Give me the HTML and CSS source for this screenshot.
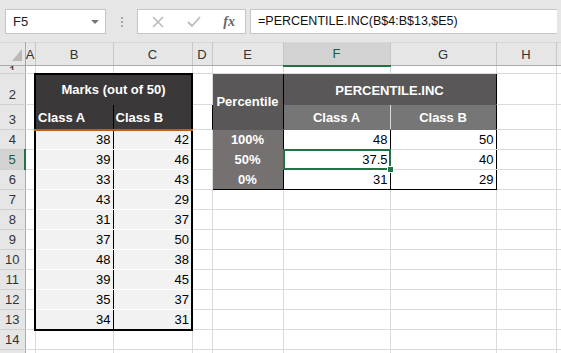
FILE: index.html
```html
<!DOCTYPE html>
<html>
<head>
<meta charset="utf-8">
<link rel="stylesheet" href="styles.css">
</head>
<body>
<div class="topbar">
  <div class="namebox"><span>F5</span><span class="caret"></span></div>
  <div class="dots"><i></i><i></i><i></i></div>
  <div class="fxbox">
    <svg class="ico" width="14" height="14" viewBox="0 0 14 14"><path d="M2 2 L12 12 M12 2 L2 12" stroke="#bcbcbc" stroke-width="1.6" fill="none"/></svg>
    <svg class="ico" width="16" height="14" viewBox="0 0 16 14"><path d="M2 7 L6 11 L14 2" stroke="#bcbcbc" stroke-width="1.8" fill="none"/></svg>
    <span class="fx">fx</span>
  </div>
  <div class="formula">=PERCENTILE.INC(B$4:B$13,$E5)</div>
</div>
<table class="sheet">
  <colgroup>
    <col class="w-rh"><col class="w-a"><col class="w-b"><col class="w-c"><col class="w-d"><col class="w-e"><col class="w-f"><col class="w-g"><col class="w-h"><col class="w-i">
  </colgroup>
  <tr class="hdr">
    <th class="corner"><svg width="12" height="14" viewBox="0 0 12 14"><polygon points="11,1 11,13 1,13" fill="#b9b9b9"/></svg></th>
    <th>A</th><th>B</th><th>C</th><th>D</th><th>E</th><th class="sel-col">F</th><th>G</th><th>H</th><th></th>
  </tr>
  <tr class="r1">
    <th class="rh"><div class="clip">1</div></th><td></td><td></td><td></td><td></td><td></td><td></td><td></td><td></td><td></td>
  </tr>
  <tr class="r2">
    <th class="rh">2</th><td></td>
    <td colspan="2" class="lt-title">Marks (out of 50)</td>
    <td></td>
    <td rowspan="2" class="rt-pct">Percentile</td>
    <td colspan="2" class="rt-title">PERCENTILE.INC</td>
    <td></td><td></td>
  </tr>
  <tr class="r3">
    <th class="rh">3</th><td></td>
    <td class="lt-head lt-l">Class A</td><td class="lt-head lt-r">Class B</td>
    <td></td>
    <td class="rt-head">Class A</td><td class="rt-head rt-g">Class B</td>
    <td></td><td></td>
  </tr>
  <tr class="rn">
    <th class="rh">4</th><td></td>
    <td class="lt-d lt-l">38</td><td class="lt-d lt-r">42</td><td></td>
    <td class="rt-lab">100%</td><td class="rt-d rt-f">48</td><td class="rt-d rt-g">50</td><td></td><td></td>
  </tr>
  <tr class="rn">
    <th class="rh sel-row">5</th><td></td>
    <td class="lt-d lt-l">39</td><td class="lt-d lt-r">46</td><td></td>
    <td class="rt-lab">50%</td><td class="rt-d rt-f active">37.5</td><td class="rt-d rt-g">40</td><td></td><td></td>
  </tr>
  <tr class="rn">
    <th class="rh">6</th><td></td>
    <td class="lt-d lt-l">33</td><td class="lt-d lt-r">43</td><td></td>
    <td class="rt-lab rt-last">0%</td><td class="rt-d rt-f rt-last">31</td><td class="rt-d rt-g rt-last">29</td><td></td><td></td>
  </tr>
  <tr class="rn">
    <th class="rh">7</th><td></td>
    <td class="lt-d lt-l">43</td><td class="lt-d lt-r">29</td><td></td><td></td><td></td><td></td><td></td><td></td>
  </tr>
  <tr class="rn">
    <th class="rh">8</th><td></td>
    <td class="lt-d lt-l">31</td><td class="lt-d lt-r">37</td><td></td><td></td><td></td><td></td><td></td><td></td>
  </tr>
  <tr class="rn">
    <th class="rh">9</th><td></td>
    <td class="lt-d lt-l">37</td><td class="lt-d lt-r">50</td><td></td><td></td><td></td><td></td><td></td><td></td>
  </tr>
  <tr class="rn">
    <th class="rh">10</th><td></td>
    <td class="lt-d lt-l">48</td><td class="lt-d lt-r">38</td><td></td><td></td><td></td><td></td><td></td><td></td>
  </tr>
  <tr class="rn">
    <th class="rh">11</th><td></td>
    <td class="lt-d lt-l">39</td><td class="lt-d lt-r">45</td><td></td><td></td><td></td><td></td><td></td><td></td>
  </tr>
  <tr class="rn">
    <th class="rh">12</th><td></td>
    <td class="lt-d lt-l">35</td><td class="lt-d lt-r">37</td><td></td><td></td><td></td><td></td><td></td><td></td>
  </tr>
  <tr class="rn">
    <th class="rh">13</th><td></td>
    <td class="lt-d lt-l lt-last">34</td><td class="lt-d lt-r lt-last">31</td><td></td><td></td><td></td><td></td><td></td><td></td>
  </tr>
  <tr class="rn">
    <th class="rh">14</th><td></td><td></td><td></td><td></td><td></td><td></td><td></td><td></td><td></td>
  </tr>
  <tr class="rn">
    <th class="rh">15</th><td></td><td></td><td></td><td></td><td></td><td></td><td></td><td></td><td></td>
  </tr>
</table>
</body>
</html>
```
FILE: styles.css
```css
html, body {
  margin: 0;
  padding: 0;
  background: #ffffff;
  overflow: hidden;
}
body {
  font-family: "Liberation Sans", Arial, sans-serif;
  width: 561px;
  height: 353px;
}
.topbar {
  height: 42px;
  background: #e6e6e6;
  display: flex;
  align-items: flex-start;
  padding: 9px 0 0 5px;
  box-sizing: border-box;
}
.namebox {
  width: 101px;
  height: 25px;
  box-sizing: border-box;
  background: #fff;
  border: 1px solid #c6c6c6;
  display: flex;
  align-items: center;
  justify-content: space-between;
  padding: 0 6px 0 7px;
  font-size: 13px;
  color: #222;
}
.caret {
  width: 0;
  height: 0;
  border-left: 4px solid transparent;
  border-right: 4px solid transparent;
  border-top: 4px solid #777;
}
.dots {
  width: 31px;
  height: 25px;
  display: flex;
  flex-direction: column;
  align-items: center;
  justify-content: center;
  gap: 2px;
}
.dots i {
  display: block;
  width: 2px;
  height: 2px;
  background: #a8a8a8;
}
.fxbox {
  width: 109px;
  height: 25px;
  box-sizing: border-box;
  background: #fff;
  border: 1px solid #c6c6c6;
  display: flex;
  align-items: center;
  padding: 0 10px 0 13px;
  justify-content: space-between;
}
.fx {
  font-family: "Liberation Serif", serif;
  font-style: italic;
  font-weight: bold;
  font-size: 14px;
  color: #666;
}
.formula {
  margin-left: 4px;
  width: 307px;
  height: 25px;
  box-sizing: border-box;
  background: #fff;
  border: 1px solid #c6c6c6;
  border-right: none;
  font-size: 12.5px;
  line-height: 23px;
  padding-left: 7px;
  color: #111;
}
.sheet {
  border-collapse: collapse;
  table-layout: fixed;
  width: 566px;
  font-size: 13px;
}
.w-rh { width: 25px; }
.w-a { width: 10px; }
.w-b { width: 78px; }
.w-c { width: 79px; }
.w-d { width: 20px; }
.w-e { width: 71px; }
.w-f { width: 107px; }
.w-g { width: 106px; }
.w-h { width: 60px; }
.w-i { width: 10px; }
td {
  border: 1px solid #dadada;
  padding: 0 2px;
  white-space: nowrap;
  overflow: hidden;
  color: #000;
}
th {
  background: #e6e6e6;
  font-weight: normal;
  color: #333;
  padding: 0;
  font-size: 13px;
}
.hdr { height: 23px; }
.hdr th {
  border-right: 1px solid #c8c8c8;
  border-bottom: 1px solid #a9a9a9;
  border-top: 1px solid #d8d8d8;
}
.hdr th.corner {
  text-align: right;
  vertical-align: bottom;
  line-height: 0;
  border-right: 1px solid #a9a9a9;
}
.corner svg { margin: 0 2px 3px 0; }
.hdr th.sel-col {
  background: #d2d2d2;
  color: #1d5c37;
  border-bottom: 2px solid #217346;
}
.rh {
  border-right: 1px solid #a9a9a9;
  border-bottom: 1px solid #d0d0d0;
  vertical-align: bottom;
  text-align: center;
  padding-bottom: 2px;
  line-height: 15px;
}
.rh.sel-row {
  background: #d2d2d2;
  color: #1d5c37;
  border-right: 2px solid #217346;
}
.r1 { height: 8px; }
.r1 .rh { padding-bottom: 0; vertical-align: top; }
.clip {
  height: 7px;
  overflow: hidden;
  line-height: 15px;
  margin-top: -3px;
}
.r2 { height: 31px; }
.r3 { height: 25px; }
.rn { height: 20px; }

.lt-title {
  background: #3a3838;
  color: #fff;
  font-weight: bold;
  text-align: center;
  border: 2px solid #000;
  border-bottom: 1px solid #3a3838;
}
.lt-head {
  background: #3a3838;
  color: #fff;
  font-weight: bold;
  text-align: left;
  padding-top: 2px;
  border-top: 1px solid #3a3838;
  border-bottom: 2px solid #c55a11;
}
.lt-l {
  border-left: 2px solid #000;
  border-right: 1px solid #000;
}
.lt-r {
  border-right: 2px solid #000;
}
.lt-d {
  background: #f2f2f2;
  text-align: right;
  border-bottom: 1px solid #ffffff;
}
.lt-d.lt-last {
  border-bottom: 2px solid #000;
}

.rt-pct {
  background: #595757;
  color: #fff;
  font-weight: bold;
  text-align: center;
  border: 1px solid #000;
  border-bottom: 1px solid #595757;
  padding: 0;
}
.rt-title {
  background: #595757;
  color: #fff;
  font-weight: bold;
  text-align: center;
  border-top: 1px solid #000;
  border-right: 1px solid #000;
  border-bottom: 1px solid #595757;
  padding-top: 2px;
}
.rt-head {
  background: #767676;
  color: #fff;
  font-weight: bold;
  text-align: center;
  border-top: 1px solid #767676;
  border-bottom: 1px solid #767676;
}
.rt-lab {
  background: #767171;
  color: #fff;
  font-weight: bold;
  text-align: center;
  border-left: 1px solid #000;
  border-right: 1px solid #000;
  border-top: 1px solid #767171;
  border-bottom: 1px solid #767171;
}
.rt-d {
  text-align: right;
}
.rt-f {
  border-right: 1px solid #000;
}
.rt-g {
  border-right: 1px solid #000;
}
.rt-last {
  border-bottom: 1px solid #000;
}
.active {
  position: relative;
  overflow: visible;
}
.active::before {
  content: "";
  position: absolute;
  left: -1px;
  top: -1px;
  right: -1px;
  bottom: -1px;
  border: 2px solid #217346;
  pointer-events: none;
}
.active::after {
  content: "";
  position: absolute;
  right: -4px;
  bottom: -4px;
  width: 5px;
  height: 5px;
  background: #217346;
  border: 1px solid #fff;
}
```
